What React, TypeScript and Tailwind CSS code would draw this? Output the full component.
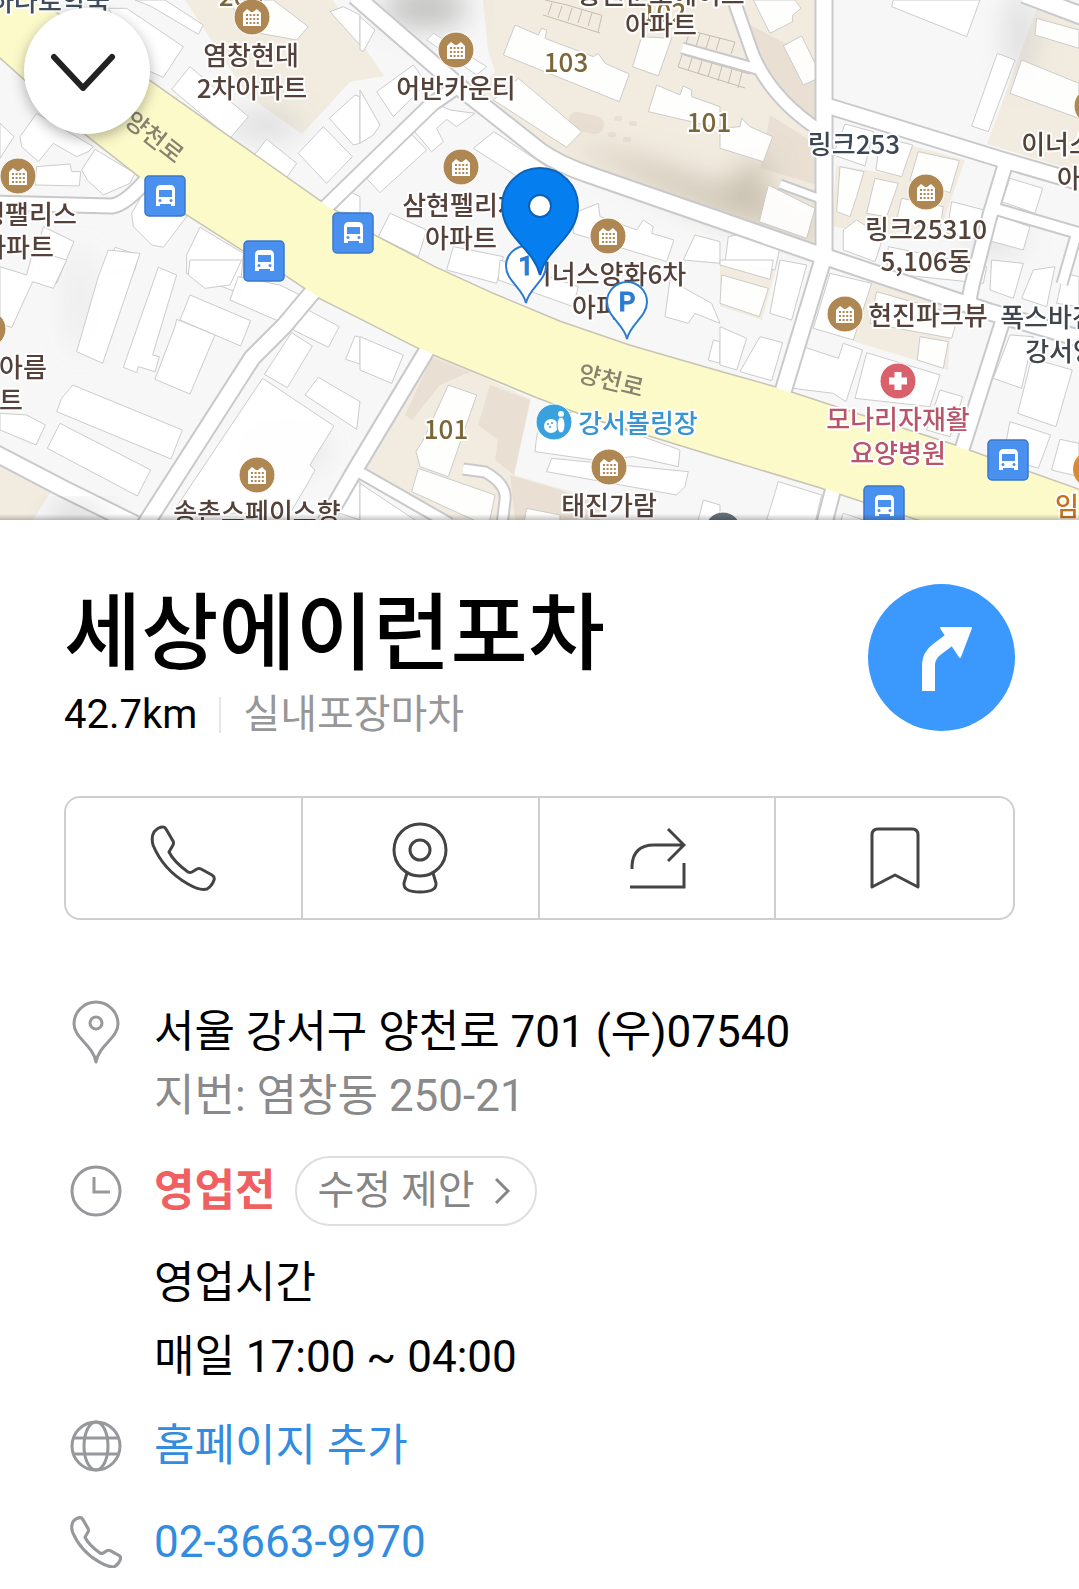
import React from 'react';

const mainRoad =
  'M0 -12 L22 -12 L148 80 L250 152 L318 200 L375 236 L434 267 L493 294 L560 322 L630 346 L720 372 L777 388 L853 413 L953 445 L1028 472 L1090 494 L1090 570 L917 519 L820 487 L720 457 L593 418 L537 397 L440 357 L417 347 L360 318 L320 298 L283 273 L243 250 L185 213 L138 175 L87 135 L0 57 Z';

const roads = [
  { d: 'M355 -4 L463 90 L540 151 Q560 165 590 175 L720 220 L820 255 L990 312 L1085 340', w: 15 },
  { d: 'M824 -5 L824 256 L782 395', w: 15 },
  { d: 'M828 106 L1003 160 L1085 184', w: 14 },
  { d: 'M1024 -6 L1085 17', w: 16 },
  { d: 'M732 -5 L753 55 Q772 100 822 132', w: 11 },
  { d: 'M682 48 L757 69', w: 9 },
  { d: 'M1006 162 L990 215 L972 285 L968 305', w: 13 },
  { d: 'M996 209 L1085 235', w: 10 },
  { d: 'M1077 232 L1062 284', w: 9 },
  { d: 'M1003 320 L958 462', w: 13 },
  { d: 'M325 208 L362 172 L432 104 L458 86', w: 13 },
  { d: 'M-5 203 L112 206 Q126 204 148 178', w: 13 },
  { d: 'M316 288 L284 326 L252 358 L145 525', w: 15 },
  { d: 'M-5 453 L62 488 L135 524', w: 15 },
  { d: 'M430 345 L355 470 L325 522', w: 14 },
  { d: 'M352 468 L450 524', w: 10 },
  { d: 'M463 469 L485 472 Q507 484 505 500 L502 525', w: 9 },
  { d: 'M835 482 L824 525', w: 14 },
  { d: 'M780 184 L818 198', w: 7 },
];

// Footprints are drawn per 360 x 270 tile, at three units to a pixel.
const tiles = [
  {
    at: 'translate(0 0) scale(.3333)',
    shapes: [
      '405,0 495,0 610,75 595,103 455,20',
      '325,25 380,25 550,140 490,232 440,210',
      '515,268 570,200 745,350 690,415',
      '690,0 820,0 925,80 890,120 780,100 710,45',
      '895,460 970,380 1057,470 980,550',
      '755,475 800,418 890,490 855,540',
      '988,355 1065,285 1080,290 1080,430 1060,435',
      '0,370 42,410 0,475',
      '60,410 110,340 280,440 265,455 230,470 160,430 115,485 65,440',
      '105,555 110,500 210,492 215,515 242,515 238,558',
      '245,510 285,448 405,520 390,550 310,585 262,540',
      '395,640 435,570 560,650 490,742 455,735 400,680',
      '130,680 222,725 170,850 90,830',
      '345,742 415,765 405,810 315,820',
      '560,765 600,682 730,760 720,880 560,820',
      '990,35 1030,20 1080,45 1080,135',
      '1000,635 1050,575 1080,590 1080,640',
    ],
  },
  {
    at: 'translate(360 0) scale(.3333)',
    shapes: [
      '465,75 535,105 545,85 560,90 555,115 700,170 715,160 735,190 808,222 778,305 430,165',
      '475,235 665,395 620,442 400,300',
      '890,255 960,285 970,258 995,270 995,290 1080,320 1080,385 865,335',
      '0,270 60,375 40,405 0,430',
      '50,275 160,195 200,250 100,350',
      '155,385 225,310 270,330 345,340 290,380 260,358 230,385 250,425 215,455',
      '15,530 150,398 200,450 60,578',
      '340,445 402,395 560,500 520,560',
      '90,640 200,690 175,770 55,710',
      '280,740 430,770 410,850 260,810',
      '640,640 715,610 720,650 830,690 850,660 880,680 875,700 942,720 920,785 640,700',
      '1005,705 1080,725 1080,790 970,780',
      '845,110 935,115 895,228 818,200',
      '200,120 220,100 380,200 350,225',
      '0,50 45,90 10,155 0,150',
    ],
  },
  {
    at: 'translate(720 0) scale(.3333)',
    shapes: [
      '100,0 225,0 243,25 218,45 218,65 150,100',
      '190,137 245,108 305,230 250,255',
      '520,0 780,0 740,110 515,20',
      '832,160 885,180 805,395 755,378',
      '950,55 1077,90 1077,145 945,105',
      '905,180 1077,250 1077,355 870,280',
      '0,385 60,380 65,355 90,380 158,410 130,485 0,445',
      '145,555 285,625 260,715 118,665',
      '25,710 60,702 178,750 165,810 15,790',
      '375,372 460,395 435,498 340,465',
      '480,410 578,435 545,530 468,510',
      '595,455 718,482 690,578 570,540',
      '360,500 432,515 410,590 390,650 350,635',
      '465,535 535,550 500,650 440,640',
      '545,595 670,620 660,690 530,660',
      '695,605 800,632 780,720 680,700',
      '370,690 410,660 490,710 465,785 370,750',
      '870,535 968,565 945,640 845,605',
      '830,645 930,680 910,750 800,720',
      '505,740 800,800 790,850 500,820',
    ],
  },
  {
    at: 'translate(0 260) scale(.3333)',
    shapes: [
      '0,20 80,45 100,-30 200,0 160,85 98,65 35,203 0,190',
      '325,-30 420,-20 308,310 230,275 295,50',
      '475,22 530,45 458,285 478,290 465,335 415,320 410,338 370,322',
      '570,105 752,182 722,258 540,180',
      '530,178 645,225 570,402 465,358 525,200',
      '570,0 725,0 690,75 615,85 565,45',
      '715,50 840,75 900,105 835,183 690,120',
      '915,145 1018,200 985,262 880,210',
      '875,218 937,258 862,383 793,343',
      '955,352 1080,425 1070,508 915,405',
      '1065,228 1080,232 1080,312 1037,298',
      '218,375 547,510 513,597 170,455 185,415',
      '180,490 452,630 412,708 142,565',
      '0,460 80,465 136,495 108,555 0,510',
      '788,355 1002,498 930,615 945,630 915,685 870,760 555,760 530,740',
      '1060,670 1080,665 1080,780 1020,760',
    ],
  },
  {
    at: 'translate(360 260) scale(.3333)',
    shapes: [
      '0,230 130,285 95,370 0,330',
      '265,375 350,405 265,650 180,620 168,575 190,540',
      '175,625 405,705 385,800 155,695',
      '0,670 180,790 0,790',
      '530,530 545,480 640,455 960,570 955,620 820,590 700,600 525,575',
      '575,595 985,635 975,680 950,705 560,635',
      '500,745 600,765 600,800 490,800',
      '930,60 1055,130 1080,190 1005,160 985,190 915,170',
      '1060,240 1080,245 1080,310 1045,300',
      '1030,720 1080,735 1080,800 1015,780',
      '420,0 655,80 640,140 415,60',
    ],
  },
  {
    at: 'translate(720 260) scale(.3333)',
    shapes: [
      '0,0 160,0 150,58 0,15',
      '5,45 145,85 118,170 0,130',
      '180,0 260,15 215,180 150,160',
      '0,200 80,235 50,330 0,315',
      '120,230 188,248 155,362 60,335',
      '330,40 455,70 400,240 280,205',
      '255,262 355,295 370,250 428,270 378,425 340,400 218,385',
      '440,278 660,345 630,440 405,415',
      '600,230 685,245 670,325 592,300',
      '470,95 715,165 695,235 450,190',
      '815,0 910,10 880,115 810,90',
      '940,30 1005,20 980,140 905,115',
      '870,225 940,230 905,385 820,355',
      '935,295 1057,330 1008,500 893,460',
      '870,485 992,525 955,625 850,590',
      '1020,538 1077,550 1077,650 995,630',
      '660,390 728,410 690,530 620,510',
      '175,665 305,705 285,790 140,780',
      '370,760 430,780 360,790',
      '1030,40 1077,50 1077,140 1010,130',
    ],
  },
];

const parkingBays = [
  'M545 0 L567 5 L601 15 M543 15 L600 33 M552 3 l-4 12 M562 6 l-4 12 M572 8 l-4 13 M582 10 l-4 13 M592 13 l-4 13 M602 15 l-4 17',
  'M684 55 L750 74 M678 67 L745 88 M682 55 l-4 12 M692 58 l-4 13 M702 61 l-4 13 M712 63 l-4 14 M722 66 l-4 15 M732 69 l-4 15 M742 72 l-4 16',
  'M688 30 L735 42 M690 31 l-4 12 M700 34 l-4 12 M710 36 l-4 12 M720 38 l-4 12 M735 42 l-4 12',
];

const labels = [
  { x: 50, y: 11, text: '하나로약국', fill: '#3f4d5c' },
  { x: 241, y: 6, text: '203', fill: '#7c6538' },
  { x: 251, y: 65, text: '염창현대', fill: '#54413a' },
  { x: 252, y: 98, text: '2차아파트', fill: '#54413a' },
  { x: 456, y: 98, text: '어반카운티', fill: '#54413a' },
  { x: 566, y: 72, text: '103', fill: '#7c6538' },
  { x: 664, y: 22, text: '102', fill: '#7c6538' },
  { x: 661, y: 4, text: '동원눈오에이트', fill: '#54413a' },
  { x: 661, y: 35, text: '아파트', fill: '#54413a' },
  { x: 709, y: 132, text: '101', fill: '#7c6538' },
  { x: 854, y: 154, text: '링크253', fill: '#3b4754' },
  { x: 926, y: 239, text: '링크25310', fill: '#54413a' },
  { x: 926, y: 271, text: '5,106동', fill: '#54413a' },
  { x: 1069, y: 154, text: '이너스내', fill: '#54413a' },
  { x: 1093, y: 188, text: '아파트', fill: '#54413a' },
  { x: 29, y: 224, text: '평팰리스', fill: '#54413a' },
  { x: 18, y: 257, text: '아파트', fill: '#54413a' },
  { x: 462, y: 215, text: '삼현펠리체', fill: '#54413a' },
  { x: 461, y: 248, text: '아파트', fill: '#54413a' },
  { x: 607, y: 284, text: '이너스양화6차', fill: '#54413a' },
  { x: 608, y: 317, text: '아파트', fill: '#54413a' },
  { x: 928, y: 325, text: '현진파크뷰', fill: '#54413a' },
  { x: 1048, y: 327, text: '폭스바겐', fill: '#3f454b' },
  { x: 1073, y: 361, text: '강서양천', fill: '#3f454b' },
  { x: 23, y: 377, text: '아름', fill: '#54413a' },
  { x: 11, y: 410, text: '트', fill: '#54413a' },
  { x: 446, y: 439, text: '101', fill: '#7c6538' },
  { x: 638, y: 433, text: '강서볼링장', fill: '#3795d3' },
  { x: 609, y: 515, text: '태진가람', fill: '#54413a' },
  { x: 257, y: 522, text: '송촌스페이스향', fill: '#54413a' },
  { x: 898, y: 429, text: '모나리자재활', fill: '#b9556a' },
  { x: 898, y: 463, text: '요양병원', fill: '#b9556a' },
  { x: 1067, y: 516, text: '임', fill: '#c5711f' },
];

const apartments = [
  [252, 17], [456, 50], [461, 167], [608, 236], [18, 176], [926, 192],
  [845, 314], [257, 475], [609, 467], [-12, 329], [1092, 106],
];

const busStops = [[165, 196], [353, 233], [264, 261], [1008, 460], [884, 506]];

function BusStop({ x, y }: { x: number; y: number }) {
  return (
    <g transform={`translate(${x} ${y})`}>
      <rect x="-20" y="-20" width="40" height="40" rx="4" fill="#4a90ee" stroke="#3a78cc" strokeWidth="1.5" />
      <path d="M-9 10 V-6 Q-9 -11 -4 -11 H5 Q10 -11 10 -6 V10 H6 V8 H-5 V10 Z" fill="#fff" />
      <path d="M-6 -6 H7 V1 H-6 Z" fill="#4a90ee" />
      <circle cx="-5" cy="4.500" r="1.500" fill="#4a90ee" />
      <circle cx="6" cy="4.500" r="1.500" fill="#4a90ee" />
    </g>
  );
}

function ApartmentPin({ x, y }: { x: number; y: number }) {
  return (
    <g transform={`translate(${x} ${y})`}>
      <circle r="18" fill="#af8753" stroke="#fff" strokeWidth="1" />
      <path d="M-9 9 V-4 L-5 -8 L-1 -5 L1 -5 L5 -8 L9 -4 V9 Z" fill="#fff" />
      <path d="M-6 -2 H7 M-6 2 H7 M-6 6 H7" stroke="#af8753" strokeWidth="2" strokeDasharray="2 1.600" />
    </g>
  );
}

function SmallPin({ x, y, text }: { x: number; y: number; text: string }) {
  return (
    <g transform={`translate(${x} ${y})`}>
      <path
        d="M0 37 C-3 22 -20 15 -20 0 A20 20 0 0 1 20 0 C20 15 3 22 0 37 Z"
        fill="#fff"
        stroke="#2b7bd3"
        strokeWidth="2"
      />
      <text
        y="9"
        textAnchor="middle"
        fontSize="26"
        fontWeight="500"
        fontFamily="Roboto, sans-serif"
        fill="#2b7bd3"
        stroke="#2b7bd3"
      >
        {text}
      </text>
    </g>
  );
}

function MapView() {
  return (
    <svg
      viewBox="0 0 1079 520"
      preserveAspectRatio="xMidYMid slice"
      className="block h-[520px] w-full"
      role="img"
      aria-label="지도"
      fontFamily="'Noto Sans CJK KR', 'Noto Sans', sans-serif"
    >
      <defs>
        <filter id="soft" x="-50%" y="-50%" width="200%" height="200%">
          <feGaussianBlur stdDeviation="14" />
        </filter>
        <linearGradient id="edge" x1="0" y1="0" x2="0" y2="1">
          <stop offset="0" stopColor="#000" stopOpacity="0" />
          <stop offset="1" stopColor="#000" stopOpacity=".22" />
        </linearGradient>
      </defs>
      <rect width="1079" height="520" fill="#f7f7f7" />

      {/* Residential blocks */}
      <g fill="#f2ece0">
        <path d="M185 0 L333 0 L384 76 L350 82 L302 134 L248 96 Z" />
        <path d="M483 0 L488 50 L495 72 L478 88 L560 157 L720 213 L817 245 L817 0 Z" />
        <path d="M1037 8 L1079 24 L1079 172 L987 144 Z" />
        <path d="M910 145 L965 160 L942 225 L880 235 L832 226 L836 165 L895 175 Z" />
        <path d="M440 357 L531 399 L514 475 L600 500 L600 520 L450 520 L362 470 L430 357 Z" />
        <path d="M0 465 L52 490 L33 520 L0 520 Z" />
        <path d="M720 260 L778 260 L762 320 L720 306 Z" />
        <path d="M868 280 L952 305 L948 370 L853 341 Z" />
      </g>
      <g fill="#e9e0d3">
        <path d="M750 25 L817 60 L817 120 Q785 100 760 55 Z" />
        <path d="M770 115 L817 145 L817 185 L760 168 Z" />
        <path d="M432 357 L470 372 L440 385 L412 420 L405 415 Z" />
        <path d="M490 385 L530 400 L514 475 L495 460 L498 440 L478 425 Z" />
        <path d="M510 475 L560 490 L600 505 L600 520 L515 520 Z" />
        <rect x="568" y="114" width="36" height="18" rx="8" transform="rotate(12 586 123)" />
        <rect x="608" y="132" width="8" height="5" rx="2" />
        <rect x="614" y="116" width="8" height="5" rx="2" />
        <rect x="629" y="121" width="8" height="5" rx="2" />
        <rect x="623" y="137" width="8" height="5" rx="2" />
      </g>

      {/* Terrain shading */}
      <g filter="url(#soft)">
        <ellipse cx="425" cy="8" rx="42" ry="20" fill="#8d8d8b" opacity=".5" />
        <ellipse cx="265" cy="125" rx="38" ry="12" fill="#bbb" opacity=".5" />
        <path d="M560 140 L650 160 L817 215 L817 245 L700 210 Z" fill="#b8ad9b" opacity=".55" />
        <path d="M745 160 L770 160 L765 205 L720 200 Z" fill="#a99f8c" opacity=".5" />
        <ellipse cx="1020" cy="35" rx="12" ry="45" fill="#bbb" opacity=".5" />
        <ellipse cx="285" cy="450" rx="40" ry="20" fill="#ccc" opacity=".4" />
        <ellipse cx="995" cy="240" rx="30" ry="12" fill="#bbb" opacity=".4" />
        <ellipse cx="80" cy="300" rx="8" ry="50" fill="#ccc" opacity=".4" />
      </g>

      {/* Buildings */}
      {tiles.map((tile) => (
        <g key={tile.at} transform={tile.at} fill="#fff" fillOpacity=".92" stroke="#cbcbcb" strokeWidth="3">
          {tile.shapes.map((points) => (
            <polygon key={points} points={points} />
          ))}
        </g>
      ))}
      <g fill="none" stroke="#c4bcae" strokeWidth="1">
        {parkingBays.map((d) => (
          <path key={d} d={d} />
        ))}
      </g>

      {/* Roads: casings first, then the surfaces */}
      <g fill="none" stroke="#c9c9cc" strokeLinejoin="round">
        {roads.map((road) => (
          <path key={road.d} d={road.d} strokeWidth={road.w + 4} />
        ))}
      </g>
      <path d={mainRoad} fill="#fdfaca" stroke="#c8c4b4" strokeWidth="3" />
      <g fill="none" stroke="#fff" strokeLinejoin="round">
        {roads.map((road) => (
          <path key={road.d} d={road.d} strokeWidth={road.w} />
        ))}
      </g>
      <path d={mainRoad} fill="#fdfaca" />
      <path d="M45 520 Q62 500 82 506 L125 520 Z" fill="#000" opacity=".2" filter="url(#soft)" />

      <g fontSize="24" fontWeight="500" fill="#86836f" textAnchor="middle">
        <text transform="translate(149 144) rotate(38)">양천로</text>
        <text transform="translate(609 389) rotate(14)">양천로</text>
      </g>
      <g fontSize="26" fontWeight="500" textAnchor="middle" stroke="#fff" strokeWidth="4" strokeLinejoin="round" paintOrder="stroke">
        {labels.map((label) => (
          <text key={`${label.x}-${label.y}`} x={label.x} y={label.y} fill={label.fill}>
            {label.text}
          </text>
        ))}
      </g>

      {apartments.map(([x, y]) => (
        <ApartmentPin key={`${x}-${y}`} x={x} y={y} />
      ))}
      {busStops.map(([x, y]) => (
        <BusStop key={`${x}-${y}`} x={x} y={y} />
      ))}

      {/* Bowling alley, hospital and other places */}
      <g transform="translate(554 422)">
        <circle r="18" fill="#38a1de" stroke="#fff" strokeWidth="1" />
        <circle cx="-3" cy="4" r="7" fill="#fff" />
        <circle cx="-6" cy="2" r="1" fill="#38a1de" />
        <circle cx="-2" cy="1" r="1" fill="#38a1de" />
        <circle cx="-4" cy="5" r="1" fill="#38a1de" />
        <circle cx="7" cy="-8" r="3" fill="#fff" />
        <ellipse cx="7" cy="3" rx="4" ry="8" fill="#fff" stroke="#38a1de" strokeWidth="1" />
      </g>
      <g transform="translate(898 381)">
        <circle r="18" fill="#d8616b" stroke="#fff" strokeWidth="1" />
        <path d="M-9 0 H9 M0 -9 V9" stroke="#fff" strokeWidth="7" />
      </g>
      <circle cx="1091" cy="469" r="18" fill="#d98a35" />
      <circle cx="723" cy="530" r="18" fill="#65717a" stroke="#fff" strokeWidth="1" />

      <SmallPin x={526} y={266} text="1" />
      <path
        d="M540 275 C533 247 502 237 502 206 A38 38 0 0 1 578 206 C578 237 547 247 540 275 Z"
        fill="#057ff0"
        stroke="#0b62b8"
        strokeWidth="2"
      />
      <circle cx="540" cy="206" r="11" fill="#fff" stroke="#0b62b8" strokeWidth="2" />
      <SmallPin x={627} y={302} text="P" />
      <rect y="514" width="1079" height="6" fill="url(#edge)" />
    </svg>
  );
}

function PhoneIcon({ className }: { className: string }) {
  return (
    <svg viewBox="0 0 66 66" className={className} fill="none" stroke="currentColor" strokeLinejoin="round">
      <path d="M4 7 Q8 2 13 2 Q15 2 16 4 L23 16 Q24 18 23 20 L19 27 Q24 37 38 47 Q40 48 42 47 L47 44 Q49 43 51 44 L62 50 Q65 52 64 55 Q62 61 57 64 Q50 66 38 59 C22 50 10 37 3 20 Q1 12 4 7 Z" />
    </svg>
  );
}

function App() {
  return (
    <div className="min-h-screen bg-white font-['Roboto','Noto_Sans_CJK_KR',sans-serif] text-black">
      {/* Map */}
      <header className="relative overflow-hidden">
        <MapView />
        <button
          type="button"
          aria-label="접기"
          className="absolute top-2 left-6 flex size-[126px] items-center justify-center rounded-full bg-white shadow-[0_4px_14px_rgba(0,0,0,0.3)]"
        >
          <svg viewBox="0 0 72 40" className="h-10 w-[72px]" fill="none" stroke="#222" strokeWidth="6" strokeLinecap="round" strokeLinejoin="round">
            <path d="M3 6 L32 37 L61 6" />
          </svg>
        </button>
      </header>

      <main className="px-16 pb-3">
        {/* Title */}
        <section className="flex items-start justify-between pt-16">
          <div>
            <h1 className="text-[84px] leading-[102px] font-medium">세상에이런포차</h1>
            <div className="mt-1 flex items-center text-[40px] leading-[50px]">
              <span>42.7km</span>
              <span className="mx-[22px] h-9 w-[2px] bg-[#e6e6e6]" />
              <span className="text-[#979797]">실내포장마차</span>
            </div>
          </div>
          <button
            type="button"
            aria-label="길찾기"
            className="flex size-[147px] shrink-0 items-center justify-center rounded-full bg-[#3b99fe]"
          >
            <svg viewBox="0 0 147 147" className="size-[147px]" fill="#fff" stroke="#fff" strokeLinejoin="round">
              <path d="M60.500 107 V80 Q61 72 68 66 L84 54" fill="none" strokeWidth="13" />
              <path d="M73 44 H103 L92 73 Z" strokeWidth="2" />
            </svg>
          </button>
        </section>

        {/* Actions */}
        <div className="mt-14 grid h-[124px] grid-cols-4 divide-x-2 divide-[#cfcfcf] rounded-2xl border-2 border-[#cfcfcf] text-[#444]">
          <button type="button" aria-label="전화" className="flex items-center justify-center">
            <PhoneIcon className="size-[66px] stroke-3" />
          </button>
          <button type="button" aria-label="로드뷰" className="flex items-center justify-center">
            <svg viewBox="0 0 56 72" className="h-[72px] w-14 stroke-3" fill="none" stroke="currentColor">
              <circle cx="28" cy="28" r="26" />
              <circle cx="28" cy="28" r="10" />
              <path d="M15 51 L12 61 Q11 70 28 70 Q45 70 44 61 L41 51" />
            </svg>
          </button>
          <button type="button" aria-label="공유" className="flex items-center justify-center">
            <svg viewBox="0 0 58 62" className="h-[62px] w-[58px] stroke-3" fill="none" stroke="currentColor">
              <path d="M4 42 V39 Q5 18 26 18 H56 M40 2 L56 18 L40 34 M2 60 H56 V36" />
            </svg>
          </button>
          <button type="button" aria-label="저장" className="flex items-center justify-center">
            <svg viewBox="0 0 50 62" className="h-[62px] w-[50px] stroke-3" fill="none" stroke="currentColor" strokeLinejoin="round">
              <path d="M2 60 V8 Q2 2 8 2 H42 Q48 2 48 8 V60 L25 48 Z" />
            </svg>
          </button>
        </div>

        {/* Details */}
        <div className="mt-20 pl-1.5 text-[44px]">
          <div className="flex gap-8">
            <svg viewBox="0 0 52 64" className="h-16 w-[52px] shrink-0 stroke-3" fill="none" stroke="#96989b">
              <path d="M26 62 C23 45 4 38 4 24 A22 22 0 0 1 48 24 C48 38 29 45 26 62 Z" strokeLinejoin="round" />
              <circle cx="26" cy="23" r="6" />
            </svg>
            <address className="leading-16 not-italic">
              <p>서울 강서구 양천로 701 (우)07540</p>
              <p className="text-[#8a8a8a]">지번: 염창동 250-21</p>
            </address>
          </div>

          <div className="mt-7 flex items-center gap-8">
            <svg viewBox="0 0 52 52" className="size-[52px] shrink-0 stroke-3" fill="none" stroke="#96989b">
              <circle cx="26" cy="26" r="24" />
              <path d="M24 12 V27 H40" />
            </svg>
            <div className="flex items-center gap-5">
              <strong className="leading-16 font-bold text-[#f16060]">영업전</strong>
              <button
                type="button"
                className="flex h-[70px] items-center gap-5 rounded-full border-2 border-[#dedede] pr-6 pl-5 text-[40px] leading-16 text-[#858585]"
              >
                수정 제안
                <svg viewBox="0 0 16 28" className="h-7 w-4 stroke-3" fill="none" stroke="currentColor">
                  <path d="M1 2 L13 14 L1 26" />
                </svg>
              </button>
            </div>
          </div>

          <div className="mt-5 pl-[84px] leading-[74px]">
            <p>영업시간</p>
            <p>매일 17:00 ~ 04:00</p>
          </div>

          <div className="mt-5 flex items-center gap-8">
            <svg viewBox="0 0 52 52" className="size-[52px] shrink-0 stroke-3" fill="none" stroke="#96989b">
              <circle cx="26" cy="26" r="24" />
              <ellipse cx="26" cy="26" rx="12" ry="24" />
              <path d="M4 18 H48 M4 34 H48" />
            </svg>
            <a href="#" className="leading-16 text-[#328ce0]">홈페이지 추가</a>
          </div>

          <div className="mt-8 flex items-center gap-8">
            <PhoneIcon className="size-[52px] shrink-0 stroke-4 text-[#96989b]" />
            <a href="tel:02-3663-9970" className="leading-16 text-[#328ce0]">02-3663-9970</a>
          </div>
        </div>
      </main>
    </div>
  );
}

export default App;
